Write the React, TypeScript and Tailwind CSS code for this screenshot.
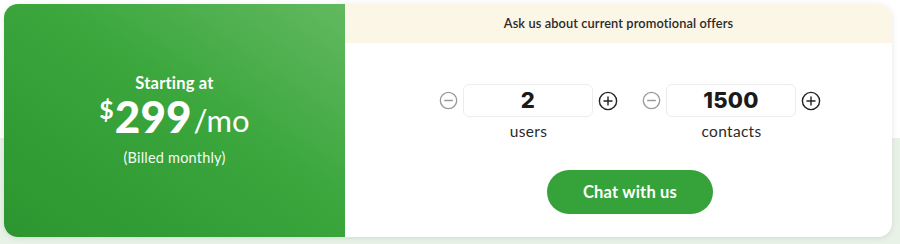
import { useState } from "react";

function MinusIcon() {
  return (
    <svg width="19" height="19" viewBox="0 0 20 20" fill="none" stroke="#9a9a9a" strokeWidth="1.4">
      <circle cx="10" cy="10" r="8.6" />
      <path d="M6 10h8" strokeLinecap="round" />
    </svg>
  );
}

function PlusIcon() {
  return (
    <svg width="20" height="20" viewBox="0 0 20 20" fill="none" stroke="#222" strokeWidth="1.4">
      <circle cx="10" cy="10" r="8.6" />
      <path d="M6 10h8M10 6v8" strokeLinecap="round" />
    </svg>
  );
}

function Stepper({ value, label }: { value: number; label: string }) {
  return (
    <div className="flex flex-col items-center">
      <div className="flex items-center">
        <button className="flex items-center justify-center mr-[5px]">
          <MinusIcon />
        </button>
        <div
          className="w-[130px] h-[33px] rounded-md border border-[#ececec] bg-white flex items-center justify-center text-[22px] font-extrabold text-[#1a1a1a] tracking-[0.3px]"
          style={{ fontFamily: "Inter, sans-serif" }}
        >
          {value}
        </div>
        <button className="flex items-center justify-center ml-[5px]">
          <PlusIcon />
        </button>
      </div>
      <div className="mt-[3px] text-[15.5px] text-[#2a2a2a] tracking-[0.3px]">{label}</div>
    </div>
  );
}

export default function App() {
  const [users] = useState(2);
  const [contacts] = useState(1500);

  return (
    <div
      className="w-[900px] h-[244px] p-[4px] pr-[8px] bg-[linear-gradient(to_bottom,#ffffff_0px,#ffffff_138px,#e9f2e7_138px,#e9f2e7_100%)]"
      style={{ fontFamily: "Lato, 'Open Sans', sans-serif" }}
    >
      <div className="flex h-[233px] rounded-[14px] shadow-[0_1px_6px_rgba(0,0,0,0.10)] bg-white overflow-hidden">
        {/* Price panel */}
        <div className="w-[341px] flex flex-col items-center justify-center text-white bg-[linear-gradient(to_top_right,#2c952f,#3aa63c_55%,#62b960)]">
          <div className="text-[16.5px] leading-[20px] font-bold tracking-[0.2px] mt-[1px]">Starting at</div>
          <div className="flex items-start leading-none mt-[1px]">
            <span className="text-[25px] font-bold mt-[3px] mr-[1px]">$</span>
            <span className="text-[44px] font-black tracking-[0px]">299</span>
            <span className="text-[31px] font-normal self-end mb-[2px] ml-[2px]">/mo</span>
          </div>
          <div className="text-[14.5px] mt-[9px] tracking-[0.2px] opacity-95">(Billed monthly)</div>
        </div>

        {/* Config panel */}
        <div className="flex-1 flex flex-col">
          <div className="h-[39px] bg-[#fcf6e6] flex items-center justify-center text-[12.8px] font-semibold text-[#2a2a2a] tracking-[0.1px]">
            Ask us about current promotional offers
          </div>
          <div className="flex-1 flex flex-col items-center pt-[41px] pl-[23px]">
            <div className="flex gap-[24px]">
              <Stepper value={users} label="users" />
              <Stepper value={contacts} label="contacts" />
            </div>
            <button className="mt-[27px] w-[166px] h-[44px] rounded-full bg-[#35a33a] text-white text-[16.5px] font-bold tracking-[0.2px]">
              Chat with us
            </button>
          </div>
        </div>
      </div>
    </div>
  );
}
